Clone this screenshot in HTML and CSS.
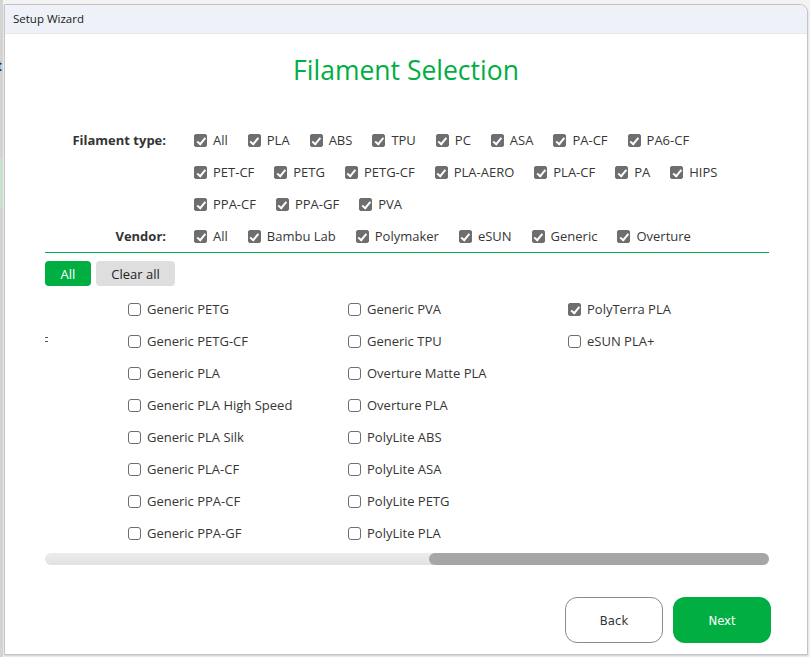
FILE: index.html
```html
<!DOCTYPE html>
<html>
<head>
<meta charset="utf-8">
<link rel="stylesheet" href="styles.css">
</head>
<body>
<div class="desk-mark">t</div>
<div class="window">
  <div class="titlebar">Setup Wizard</div>
  <div class="content">
    <h1 class="title">Filament Selection</h1>
    <div class="filters">
      <div class="frow">
        <div class="flabel">Filament type:</div>
        <div class="fitems">
          <span class="chk"><i class="box on"></i>All</span>
          <span class="chk"><i class="box on"></i>PLA</span>
          <span class="chk"><i class="box on"></i>ABS</span>
          <span class="chk"><i class="box on"></i>TPU</span>
          <span class="chk"><i class="box on"></i>PC</span>
          <span class="chk"><i class="box on"></i>ASA</span>
          <span class="chk"><i class="box on"></i>PA-CF</span>
          <span class="chk"><i class="box on"></i>PA6-CF</span>
        </div>
      </div>
      <div class="frow">
        <div class="flabel"></div>
        <div class="fitems">
          <span class="chk"><i class="box on"></i>PET-CF</span>
          <span class="chk"><i class="box on"></i>PETG</span>
          <span class="chk"><i class="box on"></i>PETG-CF</span>
          <span class="chk"><i class="box on"></i>PLA-AERO</span>
          <span class="chk"><i class="box on"></i>PLA-CF</span>
          <span class="chk"><i class="box on"></i>PA</span>
          <span class="chk"><i class="box on"></i>HIPS</span>
        </div>
      </div>
      <div class="frow">
        <div class="flabel"></div>
        <div class="fitems">
          <span class="chk"><i class="box on"></i>PPA-CF</span>
          <span class="chk"><i class="box on"></i>PPA-GF</span>
          <span class="chk"><i class="box on"></i>PVA</span>
        </div>
      </div>
      <div class="frow">
        <div class="flabel">Vendor:</div>
        <div class="fitems">
          <span class="chk"><i class="box on"></i>All</span>
          <span class="chk"><i class="box on"></i>Bambu Lab</span>
          <span class="chk"><i class="box on"></i>Polymaker</span>
          <span class="chk"><i class="box on"></i>eSUN</span>
          <span class="chk"><i class="box on"></i>Generic</span>
          <span class="chk"><i class="box on"></i>Overture</span>
        </div>
      </div>
    </div>
    <div class="divider"></div>
    <div class="actions">
      <button class="btn-all">All</button>
      <button class="btn-clear">Clear all</button>
    </div>
    <div class="list">
      <div class="clip-mark"></div>
      <div class="col">
        <span class="chk"><i class="box"></i>Generic PETG</span>
        <span class="chk"><i class="box"></i>Generic PETG-CF</span>
        <span class="chk"><i class="box"></i>Generic PLA</span>
        <span class="chk"><i class="box"></i>Generic PLA High Speed</span>
        <span class="chk"><i class="box"></i>Generic PLA Silk</span>
        <span class="chk"><i class="box"></i>Generic PLA-CF</span>
        <span class="chk"><i class="box"></i>Generic PPA-CF</span>
        <span class="chk"><i class="box"></i>Generic PPA-GF</span>
      </div>
      <div class="col">
        <span class="chk"><i class="box"></i>Generic PVA</span>
        <span class="chk"><i class="box"></i>Generic TPU</span>
        <span class="chk"><i class="box"></i>Overture Matte PLA</span>
        <span class="chk"><i class="box"></i>Overture PLA</span>
        <span class="chk"><i class="box"></i>PolyLite ABS</span>
        <span class="chk"><i class="box"></i>PolyLite ASA</span>
        <span class="chk"><i class="box"></i>PolyLite PETG</span>
        <span class="chk"><i class="box"></i>PolyLite PLA</span>
      </div>
      <div class="col">
        <span class="chk"><i class="box on"></i>PolyTerra PLA</span>
        <span class="chk"><i class="box"></i>eSUN PLA+</span>
      </div>
    </div>
    <div class="scrollbar"><div class="thumb"></div></div>
    <div class="footer">
      <button class="btn-back">Back</button>
      <button class="btn-next">Next</button>
    </div>
  </div>
</div>
</body>
</html>
```
FILE: styles.css
```css
html, body {
  margin: 0;
  padding: 0;
}
body {
  width: 810px;
  height: 657px;
  overflow: hidden;
  box-sizing: border-box;
  padding: 4px 2px 0 4px;
  background-color: #f3f3f3;
  background-image: linear-gradient(to bottom, #d4d4d4 0 158px, #c9e3d1 158px 207px, #d4d4d4 207px);
  background-size: 3px 100%;
  background-repeat: no-repeat;
  font-family: "Open Sans", "Noto Sans", sans-serif;
  color: #363636;
  position: relative;
}
.desk-mark {
  position: absolute;
  left: -3px;
  top: 58px;
  font: bold 14px "Liberation Sans", sans-serif;
  color: #1b2a5a;
}
.window {
  width: 804px;
  height: 651px;
  box-sizing: border-box;
  border: 1px solid #c4c4c4;
  border-radius: 0 8px 0 0;
  background: #fff;
  overflow: hidden;
  box-shadow: 0 1px 2px rgba(0,0,0,0.15);
}
.titlebar {
  height: 28px;
  background: #eef2f8;
  border-bottom: 1px solid #e6e9ee;
  box-sizing: content-box;
  font-size: 11.5px;
  line-height: 28px;
  padding-left: 8px;
  color: #1a1a1a;
}
.content {
  padding: 0 39px 0 39px;
}
.title {
  margin: 18px 0 0 0;
  height: 36px;
  line-height: 36px;
  text-align: center;
  font-weight: normal;
  font-size: 26.5px;
  color: #00ae42;
}
.filters {
  margin-top: 36px;
}
.frow {
  display: flex;
  height: 32px;
  align-items: center;
}
.flabel {
  width: 122px;
  text-align: right;
  font-weight: bold;
  font-size: 13px;
  color: #333;
  margin-right: 28px;
}
.fitems {
  display: flex;
  gap: 20px;
}
.chk {
  display: inline-flex;
  align-items: center;
  font-size: 13px;
  color: #363636;
  white-space: nowrap;
}
.box {
  width: 13px;
  height: 13px;
  flex-shrink: 0;
  box-sizing: border-box;
  border: 1px solid #6e6e6e;
  border-radius: 3px;
  background: #fff;
  margin-right: 6px;
  display: inline-block;
  position: relative;
}
.box.on {
  background: #6e6e6e;
  border-radius: 2px;
}
.box.on::after {
  content: "";
  position: absolute;
  left: 3.5px;
  top: 1px;
  width: 3px;
  height: 6.5px;
  border: solid #fff;
  border-width: 0 2px 2px 0;
  transform: rotate(40deg);
}
.divider {
  height: 1px;
  background: #00ae42;
  margin: 0 0 0 1px;
  width: 724px;
}
.actions {
  display: flex;
  gap: 5px;
  margin-top: 8px;
  margin-left: 1px;
}
.actions button {
  height: 25px;
  border: none;
  border-radius: 4px;
  font-family: "Open Sans", "Noto Sans", sans-serif;
  font-size: 13px;
  padding: 0;
}
.btn-all {
  width: 46px;
  background: #00ae42;
  color: #fff;
}
.btn-clear {
  width: 79px;
  background: #dedede;
  color: #222;
}
.list {
  display: flex;
  margin-top: 7px;
  padding-left: 84px;
  height: 256px;
  position: relative;
  overflow: hidden;
}
.clip-mark {
  position: absolute;
  left: 1px;
  top: 44px;
  width: 3px;
  height: 3px;
  border-top: 1px solid #555;
  border-bottom: 1px solid #555;
}
.col {
  width: 220px;
  flex-shrink: 0;
  display: flex;
  flex-direction: column;
}
.col .chk {
  height: 32px;
}
.scrollbar {
  margin-top: 4px;
  margin-left: 1px;
  width: 724px;
  height: 12px;
  border-radius: 6px;
  background: linear-gradient(to bottom, #ececec, #e2e2e2);
  display: flex;
  justify-content: flex-end;
}
.thumb {
  width: 340px;
  height: 12px;
  border-radius: 6px;
  background: #a6a6a6;
}
.footer {
  display: flex;
  justify-content: flex-end;
  gap: 10px;
  margin-top: 32px;
  width: 727px;
}
.footer button {
  width: 98px;
  height: 46px;
  border-radius: 12px;
  font-family: "DejaVu Sans", sans-serif;
  font-stretch: condensed;
  font-size: 13px;
  padding: 0;
}
.btn-back {
  background: #fff;
  border: 1px solid #8a8a8a;
  color: #333;
}
.btn-next {
  background: #00ae42;
  border: none;
  color: #fff;
}
```
